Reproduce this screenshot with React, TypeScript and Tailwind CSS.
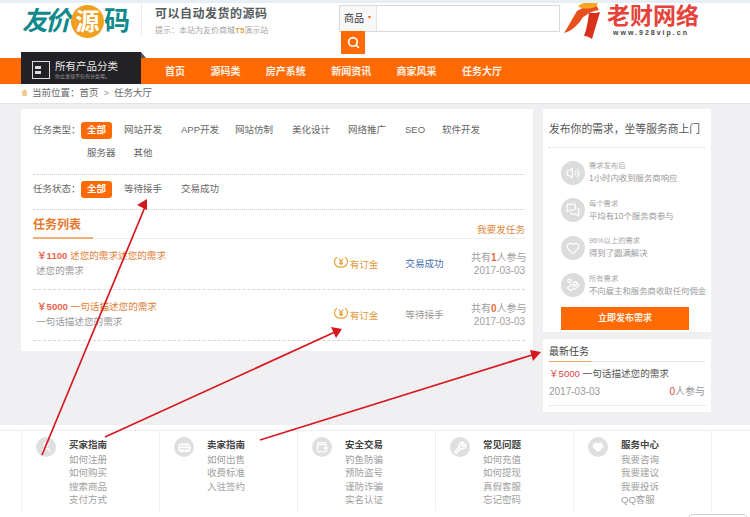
import { Volume2, MessagesSquare, Heart, Search, Bus, Wallet, Wrench, User, HandCoins } from "lucide-react";

const FONT = "font-['Liberation_Sans','Noto_Sans_CJK_SC',sans-serif]";

const types = [
  ["网站开发", "w-[38px] mr-[19px]"],
  ["APP开发", "w-[36px] mr-[18px]"],
  ["网站仿制", "w-[38px] mr-[19px]"],
  ["美化设计", "w-[38px] mr-[18px]"],
  ["网络推广", "w-[38px] mr-[19px]"],
  ["SEO", "w-[19px] mr-[18px]"],
  ["软件开发", "w-[38px]"],
];

function Pill() {
  return (
    <span className="w-[31px] h-[17px] rounded-[3px] bg-[#ff6a05] text-white text-[9.5px] font-bold flex items-center justify-center">
      全部
    </span>
  );
}

function Deposit() {
  return (
    <div className="w-[72px] flex items-center text-[#e09a3c] text-[9.6px]">
      <svg width="14" height="14" viewBox="0 0 14 14" className="mr-[2px] -mt-[3px]" fill="none" stroke="#e8a33c" strokeWidth="1.1">
        <path d="M3 2.2A5.4 5.4 0 0 0 7 12a5.4 5.4 0 0 0 4-9.8" />
        <path d="M4.8 3.5 7 6.4l2.2-2.9M7 6.4V10M5 7h4M5 8.6h4" />
      </svg>
      <span className="mt-[3px]">有订金</span>
    </div>
  );
}

function Task({ price, title, sub, status, statusCls, n }: { price: string; title: string; sub: string; status: string; statusCls: string; n: string }) {
  return (
    <div className="h-[51px] flex items-center border-b border-dashed border-[#d5d5da] ml-[12px] mr-[8px]">
      <div className="w-[300px] pl-[4px] -mt-[1px] mr-[2px]">
        <div className="text-[9.6px] leading-[14px] text-[#e07f36]">
          <b className="text-[#e8644c]">￥{price}</b> {title}
        </div>
        <div className="text-[9.6px] leading-[14px] mt-[1px] -ml-[1px] text-[#999]">{sub}</div>
      </div>
      <Deposit />
      <div className={"w-[66px] text-[9.6px] " + statusCls}>{status}</div>
      <div className="text-[10px] leading-[12.5px] text-[#a0a0a0] text-right w-[54px] whitespace-nowrap mt-[1px]">
        <div>共有<b className="text-[#e8703a]">{n}</b>人参与</div>
        <div>2017-03-03</div>
      </div>
    </div>
  );
}

function SideRow({ icon, small, big }: { icon: React.ReactNode; small: string; big: string }) {
  return (
    <div className="h-[37.5px] flex items-center pl-[18px]">
      <span className="w-[24px] h-[24px] rounded-full bg-[#dcdcdc] text-white flex items-center justify-center shrink-0">{icon}</span>
      <div className="ml-[4px] whitespace-nowrap">
        <div className="text-[7.3px] leading-[11px] text-[#a8a8a8]">{small}</div>
        <div className="text-[8.4px] leading-[14px] text-[#9a9a9a]">{big}</div>
      </div>
    </div>
  );
}

const footer = [
  { t: "买家指南", r: ["如何注册", "如何购买", "搜索商品", "支付方式"], i: <User size={12} strokeWidth={2.5} /> },
  { t: "卖家指南", r: ["如何出售", "收费标准", "入驻签约"], i: <Bus size={13} strokeWidth={2.5} /> },
  { t: "安全交易", r: ["钓鱼防骗", "预防盗号", "谨防诈骗", "实名认证"], i: <Wallet size={12} strokeWidth={2.5} /> },
  { t: "常见问题", r: ["如何充值", "如何提现", "真假客服", "忘记密码"], i: <Wrench size={13} strokeWidth={3} /> },
  { t: "服务中心", r: ["我要咨询", "我要建议", "我要投诉", "QQ客服"], i: <Heart size={12} fill="white" /> },
];

export default function App() {
  return (
    <div className={"relative w-[750px] h-[517px] overflow-hidden bg-white text-[#666] " + FONT}>
      <div className="h-[3px] bg-[#e6eff5]" />

      {/* header */}
      <div className="h-[55px] flex items-start pl-[22px] overflow-hidden">
        <div className="w-[120px] h-[36px] flex items-center text-[#10898c] text-[26px] leading-[34px] font-bold whitespace-nowrap">
          <span className="italic tracking-[-3px]">友价</span>
          <span className="w-[33px] h-[33px] rounded-full bg-[#f0a020] text-white text-[24px] flex items-center justify-center shrink-0 ml-[3px] mt-[1px]">源</span>
          <span>码</span>
        </div>
        <div className="w-px h-[33px] bg-[#eeeeee] -ml-[1px]" />
        <div className="ml-[13px] w-[184px] mt-[2px]">
          <div className="text-[12px] leading-[16px] font-bold text-[#555c60] tracking-[0.5px] mt-[1px]">可以自动发货的源码</div>
          <div className="text-[8px] leading-[12px] mt-[3px] text-[#a5a5a5] whitespace-nowrap">
            提示：本站为友价商城<b className="text-[#e2a33a]">T5</b>演示站
          </div>
        </div>
        <div className="w-[224px] mt-[2px]">
          <div className="flex h-[27px] w-[221px] border border-[#d6d8e2] bg-white">
            <div className="w-[37px] bg-[#f8f8f8] border-r border-[#e3e3e8] flex items-center pl-[4px] text-[10px] text-[#333]">
              商品<span className="ml-[4px] mb-[2px] text-[#ff6a05] text-[6px]">▾</span>
            </div>
          </div>
          <div className="w-[24px] h-[23px] bg-[#ff6a05] ml-[2px] -mt-px flex items-center justify-center">
            <Search size={13} color="white" strokeWidth={3} />
          </div>
        </div>
        <div className="flex -mt-[3px]">
          <svg width="44" height="40" viewBox="0 0 44 40">
            <path d="M14 11C20 7 26 5 33 5l3 5c-6 1-11 3-14 6l-2 1C16 24 9 31 1 33c4-6 8-14 13-22z" fill="#e8501e" />
            <path d="M26 13c5 0 8 0 11-1l-8 27c-3-2-5-3-8-3 3-8 4-15 5-23z" fill="#d8301a" />
            <path d="M15 6c6-4 14-6 19-5 2 3-1 6-5 7-6 1-11 1-14-2z" fill="#f6a623" />
          </svg>
          <div className="mt-[4px]">
            <div className="text-[#e5433a] text-[23px] leading-[25px] font-bold whitespace-nowrap">老财网络</div>
            <div className="text-[#444] text-[7px] leading-[8px] font-bold tracking-[2px] pl-[6px] whitespace-nowrap">www.928vip.cn</div>
          </div>
        </div>
      </div>

      {/* nav */}
      <div className="h-[26px] bg-[#ff6a05] flex pl-[21px] items-end">
        <div className="relative w-[120px] h-[32px] bg-[#222226] flex items-center pl-[11px] pt-[3px]">
          <span className="absolute -right-[5px] top-0 w-0 h-0 border-l-[5px] border-l-[#55555c] border-t-[6px] border-t-transparent" />
          <span className="w-[18px] h-[18px] border border-[#ddd] flex flex-col justify-center gap-[2px] pl-[2px] shrink-0">
            <span className="w-[6px] h-[3px] bg-[#ddd]" />
            <span className="w-[6px] h-[3px] bg-[#ddd]" />
          </span>
          <div className="ml-[5px] whitespace-nowrap">
            <div className="text-[10.5px] leading-[13px] text-[#e8e8e8]">所有产品分类</div>
            <div className="text-[5px] leading-[6px] text-[#999]">你会发现不仅有分类哦。</div>
          </div>
        </div>
        <div className="flex h-[26px] items-center gap-[25.4px] ml-[24px] text-[10px] font-bold text-[#fff1e6] whitespace-nowrap">
          <span>首页</span>
          <span>源码类</span>
          <span>房产系统</span>
          <span>新闻资讯</span>
          <span>商家风采</span>
          <span>任务大厅</span>
        </div>
      </div>

      {/* breadcrumb */}
      <div className="h-[19px] flex items-center pl-[21px] text-[9.5px] text-[#666]">
        <svg width="7" height="7" viewBox="0 0 7 7" className="mr-[4px] -mt-[3px]">
          <path d="M3.5 0 7 3.4H5.8V7H1.2V3.4H0z" fill="#f2c890" />
        </svg>
        当前位置：首页<span className="mx-[5px] text-[#999]">&gt;</span>任务大厅
      </div>

      {/* body */}
      <div className="h-[322px] bg-[#f0f0f3] border-t border-[#e4e4e8] pt-[5px] px-[21px] flex gap-[10px] items-start">
        <div className="w-[512px] h-[242px] bg-white">
          <div className="ml-[12px] mr-[8px] h-[66px] pt-[13px] border-b border-dotted border-[#cfcfcf] text-[9.5px] text-[#666]">
            <div className="flex items-center h-[17px] whitespace-nowrap">
              <span className="w-[48px]">任务类型：</span>
              <Pill />
              <div className="flex ml-[12px]">
                {types.map(([t, c]) => (
                  <span key={t} className={c}>{t}</span>
                ))}
              </div>
            </div>
            <div className="flex gap-[18px] pl-[54px] mt-[7px]">
              <span>服务器</span>
              <span>其他</span>
            </div>
          </div>
          <div className="ml-[12px] mr-[8px] h-[35px] border-b border-dotted border-[#cfcfcf] flex items-center text-[9.5px] text-[#666] pb-[5px]">
            <span className="w-[48px]">任务状态：</span>
            <Pill />
            <span className="ml-[12px] w-[57px]">等待接手</span>
            <span>交易成功</span>
          </div>
          <div className="ml-[12px] mr-[8px] mt-[7px] h-[22px] flex justify-between border-b border-[#eeeeee]">
            <div className="w-[60px] h-[22px] pt-[1px] border-b-2 border-[#eeb077] text-[12px] leading-[14px] font-bold text-[#e8772e]">任务列表</div>
            <span className="text-[9.6px] leading-[12px] mt-[7px] text-[#e0853a]">我要发任务</span>
          </div>
          <Task price="1100" title="述您的需求述您的需求" sub="述您的需求" status="交易成功" statusCls="text-[#3f6fb0]" n="1" />
          <Task price="5000" title="一句话描述您的需求" sub="一句话描述您的需求" status="等待接手" statusCls="text-[#999]" n="0" />
        </div>

        <div className="w-[168px]">
          <div className="h-[223px] bg-white">
            <div className="mx-[6px] h-[39px] pt-[13px] border-b border-dotted border-[#d8d8d8] text-[10.8px] leading-[15px] text-[#555] whitespace-nowrap">
              发布你的需求，坐等服务商上门
            </div>
            <div className="pt-[6px]">
              <SideRow icon={<Volume2 size={14} />} small="需求发布后" big="1小时内收到服务商响应" />
              <SideRow icon={<MessagesSquare size={14} />} small="每个需求" big="平均有10个服务商参与" />
              <SideRow icon={<Heart size={14} />} small="96%以上的需求" big="得到了圆满解决" />
              <SideRow icon={<HandCoins size={14} />} small="所有需求" big="不向雇主和服务商收取任何佣金" />
            </div>
            <div className="ml-[18px] mr-[22px] mt-[3px] h-[23px] bg-[#ff6a05] text-[#fff3e8] text-[9px] font-bold flex items-center justify-center">立即发布需求</div>
          </div>
          <div className="h-[73px] mt-[7px] bg-white px-[6px]">
            <div className="h-[23px] border-b border-[#e3e3e3] pt-[6px]">
              <div className="w-[42px] h-[17px] border-b border-[#e8a860] text-[10px] leading-[13px] text-[#444]">最新任务</div>
            </div>
            <div className="mt-[5px] text-[9.6px] leading-[14px] text-[#555] whitespace-nowrap">
              <span className="text-[#d8453f]">￥5000</span> 一句话描述您的需求
            </div>
            <div className="mt-[4px] pb-[7px] flex justify-between border-b border-dotted border-[#d8d8d8] text-[10px] leading-[13px] text-[#999]">
              <span>2017-03-03</span>
              <span><span className="text-[#d8453f]">0</span>人参与</span>
            </div>
          </div>
        </div>
      </div>

      {/* footer */}
      <div className="h-[7px] mt-[-1px]" />
      <div className="flex ml-[21px] h-[80px] relative">
        {footer.map((c) => (
          <div key={c.t} className="w-[138px] border-l border-[#f0f0f2] flex pl-[14px] pt-[6px]">
            <span className="w-[20px] h-[20px] rounded-full bg-[#dfdfe2] text-white flex items-center justify-center shrink-0">{c.i}</span>
            <div className="ml-[13px] text-[9.5px] leading-[13.5px] whitespace-nowrap">
              <div className="font-bold text-[#444] mb-[1px] mt-px">{c.t}</div>
              {c.r.map((x) => (
                <div key={x} className="text-[#a0a0a0]">{x}</div>
              ))}
            </div>
          </div>
        ))}
        <div className="border-l border-[#f0f0f2]" />
      </div>

      {/* band above footer */}
      <div className="absolute left-0 right-0 top-[430px] h-px bg-[#eeeef0]" />
      <div className="absolute left-[688px] top-[514px] w-[60px] h-[10px] rounded-[6px] border border-[#cccccc]" />

      {/* annotation arrows */}
      <svg className="absolute inset-0 pointer-events-none" width="750" height="517" viewBox="0 0 750 517">
        <g stroke="#d6181f" strokeWidth="1.7" fill="none">
          <path d="M42 455 145 207" />
          <path d="M105 437 335 332" />
          <path d="M260 440 532 355" />
        </g>
        <g fill="#d6181f">
          <path d="M147 199 137 205 147 210z" />
          <path d="M342 329 331 327 336 338z" />
          <path d="M541 352 530 350 533 361z" />
        </g>
      </svg>
    </div>
  );
}
